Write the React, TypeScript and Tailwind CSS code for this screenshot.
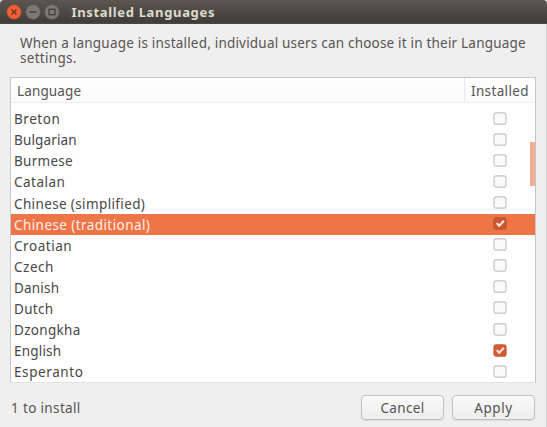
import React from "react";

const languages: { name: string; spacing: string; installed?: boolean; selected?: boolean }[] = [
  { name: "Breton", spacing: "tracking-[0.53px]" },
  { name: "Bulgarian", spacing: "tracking-[0.15px]" },
  { name: "Burmese", spacing: "tracking-[0.28px]" },
  { name: "Catalan", spacing: "tracking-[0.47px]" },
  { name: "Chinese (simplified)", spacing: "tracking-[0.37px]" },
  { name: "Chinese (traditional)", spacing: "tracking-[0.42px]", installed: true, selected: true },
  { name: "Croatian", spacing: "tracking-[0.55px]" },
  { name: "Czech", spacing: "tracking-[0.5px]" },
  { name: "Danish", spacing: "tracking-[0.2px]" },
  { name: "Dutch", spacing: "tracking-[0.3px]" },
  { name: "Dzongkha", spacing: "tracking-[0.3px]" },
  { name: "English", spacing: "tracking-[0.2px]", installed: true },
  { name: "Esperanto", spacing: "tracking-[0.6px]" },
];

function WindowControl({ kind }: { kind: "close" | "minimize" | "maximize" }) {
  const close = kind === "close";
  return (
    <svg width="16" height="16" viewBox="0 0 16 16" fill="none">
      <circle cx="8" cy="8" r="7.4" fill={close ? "#ee5f35" : "#7c7973"} stroke={close ? "#7a4231" : "#55524d"} strokeWidth="0.7" />
      <g stroke={close ? "#763321" : "#46433f"} strokeWidth="1.4">
        {close && <path d="M5.6 5.6l4.8 4.8M10.4 5.6l-4.8 4.8" />}
        {kind === "minimize" && <path d="M4.4 8h7.2" />}
        {kind === "maximize" && <rect x="5" y="5.3" width="6" height="5.4" />}
      </g>
    </svg>
  );
}

function Checkbox({ checked, selected }: { checked?: boolean; selected?: boolean }) {
  return (
    <svg width="14" height="13" viewBox="0 0 14 13" fill="none" className="block">
      <rect
        x="1" y="0.9" width="12" height="11.2" rx="2.2"
        fill={checked ? (selected ? "#cf562e" : "#d9582f") : "#fafafa"}
        stroke={checked ? (selected ? "#bd542f" : "#c45a39") : "#c6c4c4"}
        strokeWidth="1.2"
      />
      {checked && <path d="M3.7 6.1l2.5 2.6 4.7-5" stroke="#fbece6" strokeWidth="2" />}
    </svg>
  );
}

function Button({ children, spacing }: { children: string; spacing: string }) {
  return (
    <button className={`flex h-[25px] w-[83px] items-center justify-center rounded-[4px] border border-[#c3c0be] bg-linear-to-b from-[#fbfbfb] to-[#ececec] pt-px shadow-[0_1px_1px_#dcdada] ${spacing}`}>
      {children}
    </button>
  );
}

export default function App() {
  return (
    <div className="flex h-[427px] w-[547px] flex-col overflow-hidden bg-[#f0efef] font-['Noto_Sans',sans-serif] text-[13.5px] leading-[16px] text-[#575453]">
      <header className="flex h-6 shrink-0 items-center gap-[3px] rounded-t-[4px] border-b border-[#4b4945] bg-linear-to-b from-[#5b564e] to-[#403d39] pl-[5.5px]">
        <WindowControl kind="close" />
        <WindowControl kind="minimize" />
        <WindowControl kind="maximize" />
        <h1 className="ml-[9px] text-[13px] font-bold tracking-[0.66px] text-[#dedad0]">Installed Languages</h1>
      </header>
      <main className="flex min-h-0 flex-1 flex-col border-r border-[#d4d2d2] px-[10px]">
        <p className="h-[53px] shrink-0 pt-[12px] pl-[10px] leading-[15px] whitespace-nowrap">
          <span className="block tracking-[0.2px]">When a language is installed, individual users can choose it in their Language</span>
          <span className="block tracking-[0.3px]">settings.</span>
        </p>
        <section className="flex h-[306px] w-[526px] shrink-0 flex-col border border-[#c8c5c4] border-b-[#e4e2e2] bg-[#fefefe]">
          <div className="flex h-[25px] shrink-0 border-b border-[#ececec] bg-linear-to-b from-white to-[#fafafa]">
            <div className="flex flex-1 items-center pt-px pl-[6px] tracking-[0.13px]">Language</div>
            <div className="flex w-[71px] items-center border-l border-[#e9e8e8] pt-px pl-[6px] tracking-[0.35px]">Installed</div>
          </div>
          <div className="relative flex flex-col pt-[5.7px] text-[#494747]">
            {languages.map((l) => (
              <div key={l.name} className={`flex h-[21.08px] items-center pl-[3px] ${l.selected ? "bg-[#ee7547] text-[#fff0e9]" : ""}`}>
                <span className={`flex-1 ${l.spacing}`}>{l.name}</span>
                <span className="mr-[28px] pb-[2px]"><Checkbox checked={l.installed} selected={l.selected} /></span>
              </div>
            ))}
            <div className="absolute top-[39px] right-0 h-[44px] w-[5px] bg-[#f2ad95]" />
          </div>
        </section>
        <footer className="flex flex-1 items-center justify-between pt-[5px] pl-px">
          <span className="tracking-[0.35px]">1 to install</span>
          <div className="mr-px flex gap-2">
            <Button spacing="tracking-[0.35px]">Cancel</Button>
            <Button spacing="tracking-[0.6px]">Apply</Button>
          </div>
        </footer>
      </main>
    </div>
  );
}
